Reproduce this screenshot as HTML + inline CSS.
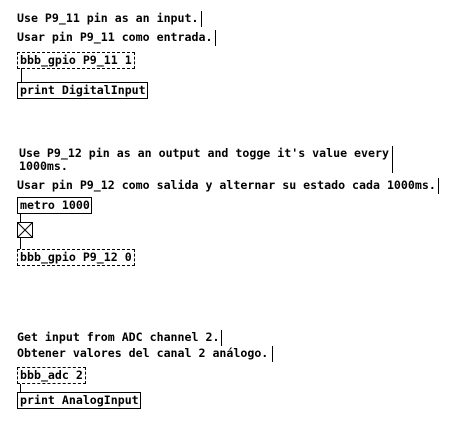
<!DOCTYPE html><html><head><style>
body{margin:0;width:467px;height:433px;background:#fff;position:relative;overflow:hidden;font-family:"DejaVu Sans Mono","Liberation Mono",monospace;font-weight:bold;font-size:11.6px;color:#000}
.t{position:absolute;white-space:pre;line-height:13px}
.b{position:absolute;height:15px;border:1px solid #000;box-sizing:content-box;line-height:15px;padding-left:2px;white-space:pre}
.d{border-style:dashed}
.v{position:absolute;width:1px;background:#000}
.l{position:absolute;width:1px;background:#000}
.in{position:absolute;top:-1px;width:7px;height:2px;background:#000}
</style></head><body>
<div class="t" style="left:17px;top:12px">Use P9_11 pin as an input.</div><div class="v" style="left:201px;top:11px;height:16px"></div>
<div class="t" style="left:17px;top:31px">Usar pin P9_11 como entrada.</div><div class="v" style="left:215px;top:30px;height:16px"></div>
<div class="b d" style="left:17px;top:52px;width:114px">bbb_gpio P9_11 1</div>
<div class="l" style="left:21px;top:68px;height:14px"></div>
<div class="b" style="left:17px;top:82px;width:127px">print DigitalInput</div>

<div class="t" style="left:19px;top:147px">Use P9_12 pin as an output and togge it's value every
1000ms.</div><div class="v" style="left:392px;top:146px;height:27px"></div>
<div class="t" style="left:17px;top:179px">Usar pin P9_12 como salida y alternar su estado cada 1000ms.</div><div class="v" style="left:438px;top:178px;height:16px"></div>
<div class="b" style="left:17px;top:197px;width:71px">metro 1000</div>
<div class="l" style="left:20px;top:214px;height:8px"></div>
<svg style="position:absolute;left:17px;top:222px" width="16" height="16"><rect x="0.5" y="0.5" width="15" height="15" fill="#fff" stroke="#000"/><path d="M1 1L15 15M15 1L1 15" stroke="#000"/></svg>
<div class="l" style="left:20px;top:238px;height:11px"></div>
<div class="b d" style="left:17px;top:249px;width:114px">bbb_gpio P9_12 0</div>

<div class="t" style="left:17px;top:331px">Get input from ADC channel 2.</div><div class="v" style="left:221px;top:330px;height:16px"></div>
<div class="t" style="left:17px;top:347px">Obtener valores del canal 2 análogo.</div><div class="v" style="left:272px;top:346px;height:16px"></div>
<div class="b d" style="left:17px;top:367px;width:65px">bbb_adc 2</div>
<div class="l" style="left:20px;top:384px;height:8px"></div>
<div class="b" style="left:17px;top:392px;width:120px">print AnalogInput</div>
</body></html>
